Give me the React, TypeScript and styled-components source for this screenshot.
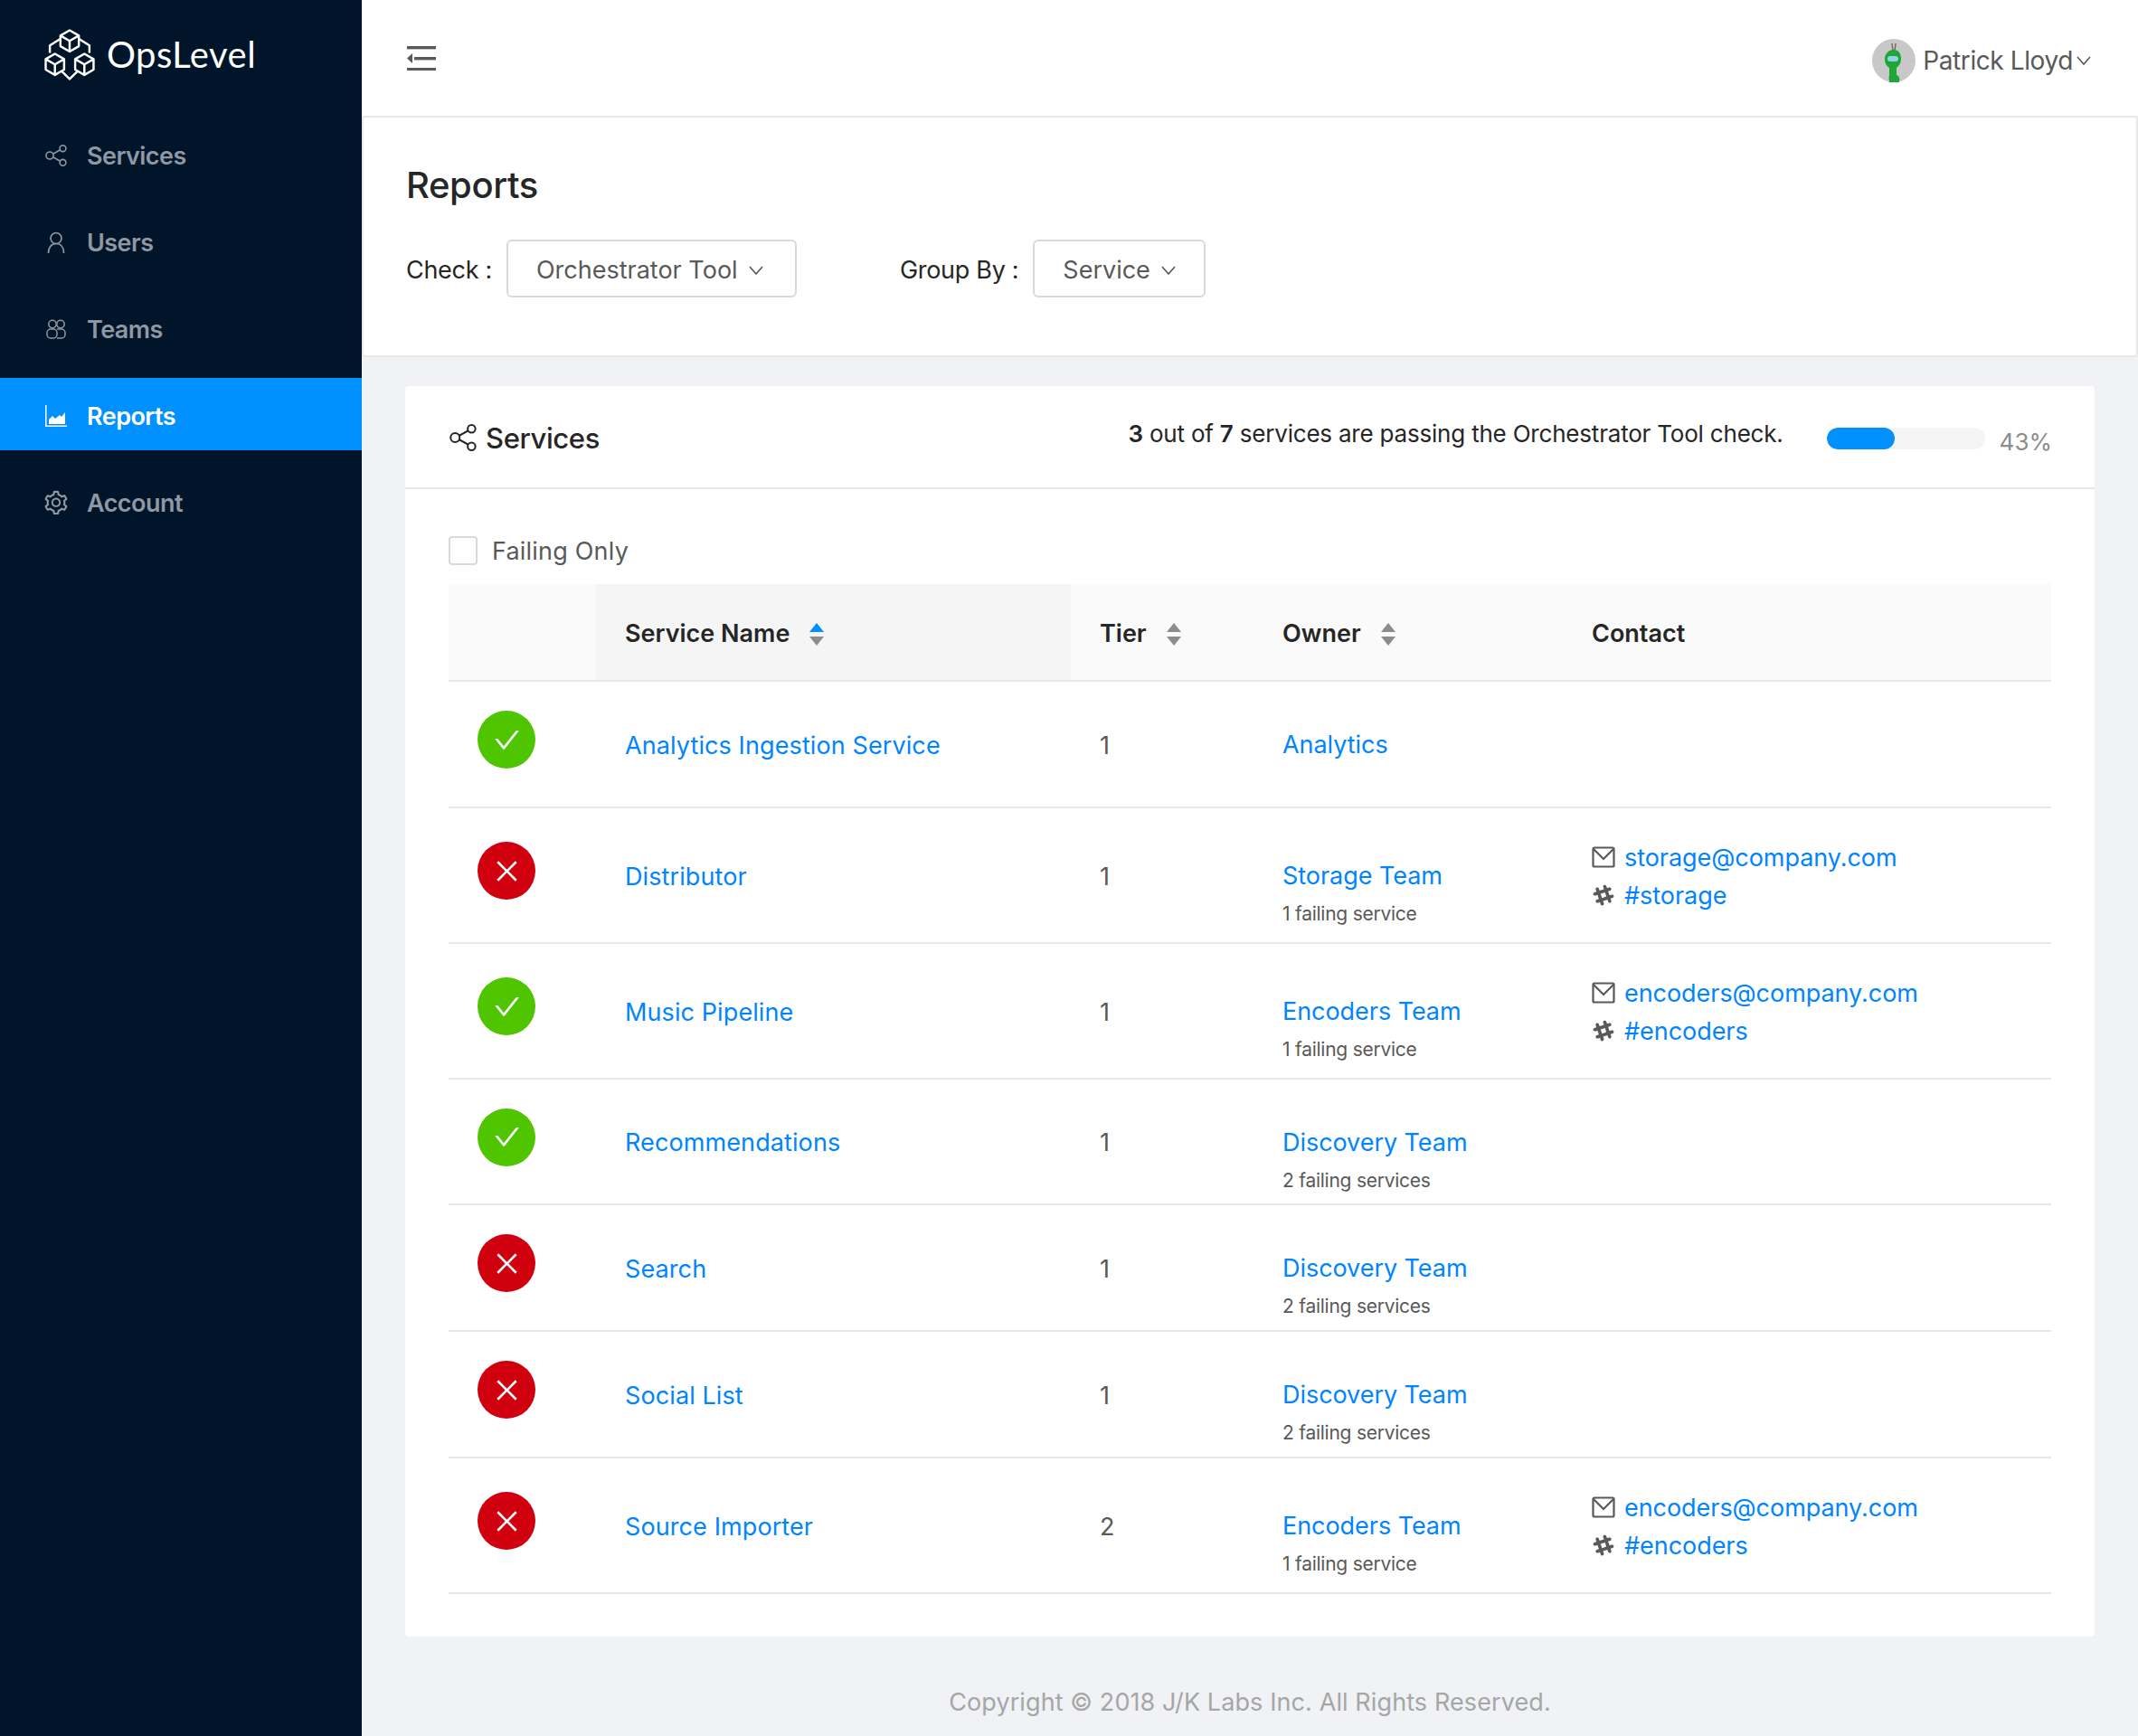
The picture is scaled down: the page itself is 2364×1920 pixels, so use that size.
import React from "react";
import styled, { createGlobalStyle } from "styled-components";
import { AiOutlineCheck, AiOutlineClose, AiOutlineSetting } from "react-icons/ai";
import { FaSlackHash } from "react-icons/fa";

const GlobalStyle = createGlobalStyle`
  html, body {
    margin: 0;
    padding: 0;
    background: #f0f2f5;
    font-family: Inter, "Liberation Sans", sans-serif;
    color: #595959;
  }
  * { box-sizing: border-box; }
`;

const Layout = styled.div`
  display: flex;
  width: 2364px;
  height: 1920px;
  overflow: hidden;
`;

const Sider = styled.aside`
  width: 400px;
  flex: none;
  background: #001529;
`;

const Logo = styled.div`
  display: flex;
  align-items: center;
  gap: 13px;
  height: 120px;
  padding: 0 0 0 49px;
`;

const LogoText = styled.span`
  font-family: Lato, sans-serif;
  font-size: 40px;
  color: #fff;
  letter-spacing: 0.5px;
`;

const Nav = styled.nav`
  display: flex;
  flex-direction: column;
  gap: 16px;
  margin-top: 10px;
`;

const NavItem = styled.div<{ $active?: boolean }>`
  display: flex;
  align-items: center;
  gap: 22px;
  height: 80px;
  padding: 4px 0 0 50px;
  font-size: 27px;
  font-weight: 600;
  letter-spacing: -0.55px;
  color: ${(p) => (p.$active ? "#fff" : "#8f98a3")};
  background: ${(p) => (p.$active ? "#0090ff" : "transparent")};
  svg {
    width: 24px;
    height: 24px;
    flex: none;
  }
`;

const GearIcon = styled(AiOutlineSetting)`
  && {
    width: 30px;
    height: 30px;
    margin: 0 -3px;
  }
`;

const Main = styled.main`
  flex: 1;
  min-width: 0;
  display: flex;
  flex-direction: column;
`;

const Topbar = styled.header`
  height: 128px;
  flex: none;
  background: #fff;
  display: flex;
  align-items: center;
  justify-content: space-between;
  padding: 0 52px 0 50px;
`;

const UserMenu = styled.div`
  display: flex;
  align-items: center;
  gap: 4px;
  margin-top: 5px;
  font-size: 28px;
  color: #595959;
  letter-spacing: -0.4px;
`;

const Avatar = styled.svg`
  width: 48px;
  height: 48px;
  margin-right: 4px;
`;

const PageHead = styled.section`
  height: 267px;
  flex: none;
  background: #fff;
  border: 2px solid #e8e8e8;
  border-radius: 4px;
  padding: 30px 48px 0 47px;
`;

const PageTitle = styled.h1`
  margin: 0;
  font-size: 40px;
  line-height: 90px;
  font-weight: 500;
  letter-spacing: -0.4px;
  color: #262626;
`;

const Filters = styled.div`
  display: flex;
  align-items: center;
  margin-top: 15px;
`;

const FilterLabel = styled.span`
  padding-top: 3px;
  font-size: 27px;
  color: #262626;
  margin-right: 16px;
  letter-spacing: -0.3px;
`;

const Select = styled.div<{ $w: number; $gap: number }>`
  display: flex;
  align-items: center;
  gap: 12px;
  width: ${(p) => p.$w}px;
  height: 64px;
  padding: 3px 0 0 31px;
  margin-right: ${(p) => p.$gap}px;
  border: 2px solid #d9d9d9;
  border-radius: 6px;
  font-size: 27px;
  letter-spacing: 0;
  color: #595959;
`;

const Chevron = styled.svg.attrs({ viewBox: "0 0 16 10" })`
  width: 16px;
  height: 10px;
  fill: none;
  stroke: #595959;
  stroke-width: 1.6;
`;

const Card = styled.section`
  margin: 32px 48px 0;
  height: 1383px;
  flex: none;
  background: #fff;
  border-radius: 4px;
`;

const CardHead = styled.div`
  height: 114px;
  border-bottom: 2px solid #e8e8e8;
  padding: 0 47px 0 49px;
  display: flex;
  align-items: center;
`;

const CardTitle = styled.h2`
  display: flex;
  align-items: center;
  gap: 10px;
  margin: 0;
  padding-top: 2px;
  flex: 1;
  font-size: 31px;
  font-weight: 500;
  letter-spacing: -0.4px;
  color: #262626;
  svg {
    width: 30px;
    height: 30px;
  }
`;

const Summary = styled.p`
  margin: -8px 48px 0 0;
  font-size: 26px;
  letter-spacing: -0.2px;
  color: #262626;
  b {
    font-weight: 600;
  }
`;

const Track = styled.div`
  width: 175px;
  height: 24px;
  background: #f5f5f5;
  border-radius: 12px;
  margin: 4px 16px 0 0;
  overflow: hidden;
`;

const Fill = styled.div`
  height: 100%;
  background: #0090ff;
  border-radius: 12px;
`;

const Percent = styled.span`
  margin-top: 11px;
  font-size: 26px;
  color: #8c8c8c;
`;

const CardBody = styled.div`
  padding: 48px 48px 0;
`;

const CheckRow = styled.label`
  display: flex;
  align-items: center;
  gap: 16px;
  height: 36px;
  margin: 0 0 21px;
  padding-top: 4px;
  font-size: 27px;
  letter-spacing: 0.2px;
  color: #595959;
`;

const CheckBox = styled.span`
  width: 32px;
  height: 32px;
  border: 2px solid #d9d9d9;
  border-radius: 4px;
  background: #fff;
`;

const Table = styled.table`
  width: 1772px;
  table-layout: fixed;
  border-collapse: collapse;
  border-spacing: 0;
`;

const HeadCell = styled.th<{ $sorted?: boolean }>`
  height: 107px;
  padding: 2px 0 0 32px;
  text-align: left;
  font-size: 27px;
  font-weight: 600;
  letter-spacing: 0;
  color: #262626;
  background: ${(p) => (p.$sorted ? "#f5f5f5" : "#fafafa")};
  border-bottom: 2px solid #e8e8e8;
`;

const HeadInner = styled.div`
  display: flex;
  align-items: center;
  gap: 22px;
`;

const Carets = styled.span<{ $active?: boolean }>`
  display: inline-flex;
  flex-direction: column;
  gap: 5px;
  padding-top: 2px;
  &::before,
  &::after {
    content: "";
    width: 0;
    height: 0;
    border-left: 8px solid transparent;
    border-right: 8px solid transparent;
  }
  &::before {
    border-bottom: 10px solid ${(p) => (p.$active ? "#0090ff" : "#8c8c8c")};
  }
  &::after {
    border-top: 10px solid #8c8c8c;
  }
`;

const Row = styled.tr<{ $h: number }>`
  height: ${(p) => p.$h}px;
`;

const Cell = styled.td`
  padding: 2px 0 0 32px;
  vertical-align: middle;
  border-bottom: 2px solid #e8e8e8;
  font-size: 27px;
  letter-spacing: -0.05px;
  color: #595959;
`;

const NameCell = styled(Cell)`
  letter-spacing: 0.1px;
`;

const StatusBadge = styled.div<{ $pass: boolean }>`
  display: flex;
  align-items: center;
  justify-content: center;
  width: 64px;
  height: 64px;
  margin-bottom: 12px;
  border-radius: 50%;
  color: #fff;
  background: ${(p) => (p.$pass ? "#4fc500" : "#d0000f")};
  svg {
    width: 33px;
    height: 33px;
  }
`;

const LinkText = styled.a`
  color: #0084ff;
  text-decoration: none;
`;

const OwnerSub = styled.div`
  height: 42px;
  margin-bottom: -42px;
  padding-top: 10px;
  font-size: 21px;
  line-height: 32px;
  letter-spacing: -0.25px;
  color: #595959;
`;

const OwnerName = styled.div`
  line-height: 32px;
`;

const ContactLine = styled.div`
  display: flex;
  align-items: center;
  gap: 10px;
  height: 42px;
  svg {
    width: 26px;
    height: 26px;
    flex: none;
    color: #595959;
  }
`;

const Footer = styled.footer`
  flex: 1;
  text-align: center;
  padding-top: 57px;
  font-size: 27px;
  line-height: 32px;
  letter-spacing: 0.1px;
  color: #a6a6a6;
`;

const CUBES: [number, number][] = [
  [27.5, 13],
  [11.5, 38.5],
  [43.5, 38.5],
];

const LogoIcon = () => (
  <svg width="56" height="57" viewBox="0 0 55 56" fill="none" stroke="#fff" strokeWidth="2.4" strokeLinejoin="round">
    {CUBES.map(([x, y]) => (
      <path
        key={x}
        d={`M${x} ${y - 11.5}l10 5.75v11.5l-10 5.75l-10-5.75v-11.5zM${x - 10} ${y - 5.75}l10 5.75l10-5.75M${x} ${y}v11.5`}
      />
    ))}
    <path d="M17 11L6 18v8M38 11l11 7v8M19 46l8.5 8.5 8.5-8.5" />
  </svg>
);

const ShareIcon = () => (
  <svg viewBox="0 0 24 24" fill="none" stroke="currentColor" strokeWidth="1.6">
    <circle cx="5" cy="12" r="4" />
    <circle cx="19.5" cy="4.2" r="3.4" />
    <circle cx="19.5" cy="19.8" r="3.4" />
    <path d="M8.6 10.2l8-4.4M8.6 13.8l8 4.4" />
  </svg>
);

const UserIcon = () => (
  <svg viewBox="0 0 24 24" fill="none" stroke="currentColor" strokeWidth="1.7">
    <circle cx="12" cy="7.5" r="6" />
    <path d="M3.5 24c0-6 3-10.5 8.5-10.5S20.5 18 20.5 24" />
  </svg>
);

const TeamsIcon = () => (
  <svg viewBox="0 0 24 24" fill="none" stroke="currentColor" strokeWidth="1.5">
    <circle cx="8" cy="6.5" r="4.2" />
    <circle cx="17" cy="6.5" r="4.2" />
    <rect x="2" y="12" width="11" height="10" rx="4" />
    <path d="M13 12h5a4 4 0 0 1 4 4v2a4 4 0 0 1-4 4h-5" />
  </svg>
);

const ChartIcon = () => (
  <svg viewBox="0 0 24 24" fill="currentColor">
    <path d="M0 0h1.5v22.5H24V24H0z" />
    <path d="M4 21v-5l4-4 3 3 5-4 2 2 4-5v13z" />
  </svg>
);

const MailIcon = () => (
  <svg viewBox="0 0 26 26" fill="none" stroke="currentColor" strokeWidth="2.2">
    <rect x="1.5" y="2.5" width="23" height="21" rx="1.5" />
    <path d="M2 4l11 11L24 4" />
  </svg>
);

const MenuIcon = () => (
  <svg width="32" height="27" viewBox="0 0 32 27" fill="#595959">
    <rect x="0" y="0" width="32" height="3.4" />
    <rect x="8" y="12" width="24" height="3.4" />
    <rect x="0" y="24" width="32" height="3.4" />
    <path d="M6 8v11L0 13.5z" />
  </svg>
);

const AvatarIcon = () => (
  <Avatar viewBox="0 0 48 48">
    <circle cx="24" cy="24" r="24" fill="#c8c8c8" />
    <path d="M22 5l1 8M26 5l-1 8" stroke="#7a6a5a" strokeWidth="1.5" />
    <path
      d="M24 12c5 0 8 4 8 10s-3 8-5 10v8c3 1 4 4 3 8H19c0-3-1-5 0-8v-8c-3-2-5-5-5-10s4-10 10-10z"
      fill="#1fa637"
    />
    <rect x="17" y="19" width="12" height="6" rx="3" fill="#8fd3e8" />
  </Avatar>
);

type Contact = { email: string; slack: string };
type Service = {
  name: string;
  pass: boolean;
  tier: number;
  owner: string;
  failing?: string;
  contact?: Contact;
  h: number;
};

const storage: Contact = { email: "storage@company.com", slack: "#storage" };
const encoders: Contact = { email: "encoders@company.com", slack: "#encoders" };

const SERVICES: Service[] = [
  { name: "Analytics Ingestion Service", pass: true, tier: 1, owner: "Analytics", h: 140 },
  { name: "Distributor", pass: false, tier: 1, owner: "Storage Team", failing: "1 failing service", contact: storage, h: 150 },
  { name: "Music Pipeline", pass: true, tier: 1, owner: "Encoders Team", failing: "1 failing service", contact: encoders, h: 150 },
  { name: "Recommendations", pass: true, tier: 1, owner: "Discovery Team", failing: "2 failing services", h: 139 },
  { name: "Search", pass: false, tier: 1, owner: "Discovery Team", failing: "2 failing services", h: 140 },
  { name: "Social List", pass: false, tier: 1, owner: "Discovery Team", failing: "2 failing services", h: 140 },
  { name: "Source Importer", pass: false, tier: 2, owner: "Encoders Team", failing: "1 failing service", contact: encoders, h: 150 },
];

const NAV = [
  { label: "Services", icon: <ShareIcon /> },
  { label: "Users", icon: <UserIcon /> },
  { label: "Teams", icon: <TeamsIcon /> },
  { label: "Reports", icon: <ChartIcon />, active: true },
  { label: "Account", icon: <GearIcon /> },
];

const ChevronDown = () => (
  <Chevron>
    <path d="M1 1l7 8 7-8" />
  </Chevron>
);

const App: React.FC = () => {
  return (
    <>
      <GlobalStyle />
      <Layout>
        <Sider>
          <Logo>
            <LogoIcon />
            <LogoText>OpsLevel</LogoText>
          </Logo>
          <Nav>
            {NAV.map((item) => (
              <NavItem key={item.label} $active={item.active}>
                {item.icon}
                {item.label}
              </NavItem>
            ))}
          </Nav>
        </Sider>
        <Main>
          <Topbar>
            <MenuIcon />
            <UserMenu>
              <AvatarIcon />
              Patrick Lloyd
              <ChevronDown />
            </UserMenu>
          </Topbar>
          <PageHead>
            <PageTitle>Reports</PageTitle>
            <Filters>
              <FilterLabel>Check :</FilterLabel>
              <Select $w={321} $gap={114}>
                Orchestrator Tool <ChevronDown />
              </Select>
              <FilterLabel>Group By :</FilterLabel>
              <Select $w={191} $gap={0}>
                Service <ChevronDown />
              </Select>
            </Filters>
          </PageHead>
          <Card>
            <CardHead>
              <CardTitle>
                <ShareIcon />
                Services
              </CardTitle>
              <Summary>
                <b>3</b> out of <b>7</b> services are passing the Orchestrator Tool check.
              </Summary>
              <Track>
                <Fill style={{ width: `${(3 / 7) * 100}%` }} />
              </Track>
              <Percent>43%</Percent>
            </CardHead>
            <CardBody>
              <CheckRow>
                <CheckBox />
                Failing Only
              </CheckRow>
              <Table>
                <colgroup>
                  <col width={163} />
                  <col width={525} />
                  <col width={202} />
                  <col width={342} />
                  <col width={540} />
                </colgroup>
                <thead>
                  <tr>
                    <HeadCell />
                    <HeadCell $sorted>
                      <HeadInner>
                        Service Name <Carets $active />
                      </HeadInner>
                    </HeadCell>
                    <HeadCell>
                      <HeadInner>
                        Tier <Carets />
                      </HeadInner>
                    </HeadCell>
                    <HeadCell>
                      <HeadInner>
                        Owner <Carets />
                      </HeadInner>
                    </HeadCell>
                    <HeadCell>Contact</HeadCell>
                  </tr>
                </thead>
                <tbody>
                  {SERVICES.map((s) => (
                    <Row key={s.name} $h={s.h}>
                      <Cell>
                        <StatusBadge $pass={s.pass}>{s.pass ? <AiOutlineCheck /> : <AiOutlineClose />}</StatusBadge>
                      </Cell>
                      <NameCell>
                        <LinkText>{s.name}</LinkText>
                      </NameCell>
                      <Cell>{s.tier}</Cell>
                      <Cell>
                        <OwnerName>
                          <LinkText>{s.owner}</LinkText>
                        </OwnerName>
                        {s.failing && <OwnerSub>{s.failing}</OwnerSub>}
                      </Cell>
                      <Cell>
                        {s.contact && (
                          <>
                            <ContactLine>
                              <MailIcon />
                              <LinkText>{s.contact.email}</LinkText>
                            </ContactLine>
                            <ContactLine>
                              <FaSlackHash />
                              <LinkText>{s.contact.slack}</LinkText>
                            </ContactLine>
                          </>
                        )}
                      </Cell>
                    </Row>
                  ))}
                </tbody>
              </Table>
            </CardBody>
          </Card>
          <Footer>Copyright © 2018 J/K Labs Inc. All Rights Reserved.</Footer>
        </Main>
      </Layout>
    </>
  );
};

export default App;
